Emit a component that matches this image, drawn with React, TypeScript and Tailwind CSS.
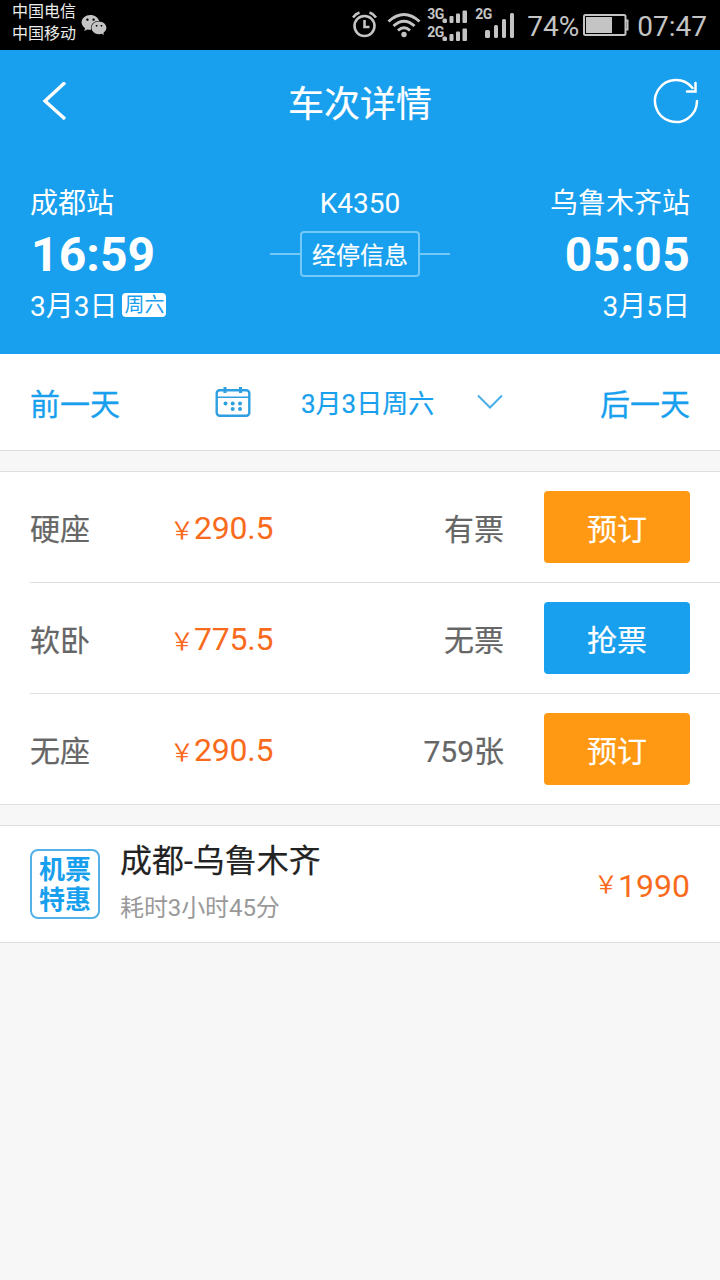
import { FaWeixin } from 'react-icons/fa';

const seats = [
    {
        id: 1,
        name: "硬座",
        price: "290.5",
        left: "有票",
        action: "预订",
        color: "bg-[#ff9913]"
    },
    {
        id: 2,
        name: "软卧",
        price: "775.5",
        left: "无票",
        action: "抢票",
        color: "bg-[#189fed]"
    },
    {
        id: 3,
        name: "无座",
        price: "290.5",
        left: "759张",
        action: "预订",
        color: "bg-[#ff9913]"
    },
]

function AlarmIcon() {
    return (
        <svg width="26" height="28" viewBox="0 0 26 28" fill="none" stroke="#c4c4c4" strokeWidth="2.6">
            <circle cx="12.5" cy="15" r="10" />
            <path d="M12.5 9v7h5" strokeWidth="2.6" />
            <path d="M1 6.5Q3.5 2.8 7.5 1.6M24 6.5Q21.5 2.8 17.5 1.6" />
        </svg>
    )
}

function WifiIcon() {
    return (
        <svg width="34" height="26" viewBox="0 0 34 26" fill="none" stroke="#c4c4c4" strokeWidth="3">
            <path d="M1.5 9.5Q17-4.5 32.5 9.5" />
            <path d="M6.5 14Q17 4.5 27.5 14" />
            <path d="M11 18.5Q17 13 23 18.5" />
            <circle cx="17" cy="22.5" r="2.7" fill="#c4c4c4" stroke="none" />
        </svg>
    )
}

function SmallSignal() {
    return (
        <svg width="26" height="14" viewBox="0 0 26 14" fill="#c4c4c4">
            <rect x="0.5" y="9.5" width="4.5" height="4.5" rx="1.5" />
            <rect x="7.5" y="7" width="4" height="7" rx="1" />
            <rect x="14" y="4.5" width="4" height="9.5" rx="1" />
            <rect x="20.5" y="1.5" width="4.5" height="12.5" rx="1" />
        </svg>
    )
}

function BigSignal() {
    return (
        <svg width="30" height="26" viewBox="0 0 30 26" fill="#c4c4c4">
            <rect x="0" y="18" width="5" height="8" rx="1.5" />
            <rect x="9" y="13" width="4" height="13" rx="1.5" />
            <rect x="17" y="7" width="4" height="19" rx="1.5" />
            <rect x="25" y="1" width="4" height="25" rx="1.5" />
        </svg>
    )
}

function BatteryIcon() {
    return (
        <svg width="46" height="24" viewBox="0 0 46 24" fill="none">
            <rect x="1" y="2" width="41.5" height="20" rx="1.5" stroke="#c4c4c4" strokeWidth="2" />
            <rect x="3" y="4" width="26" height="16" fill="#c4c4c4" />
            <path d="M43 7.5h1.5v9H43" stroke="#c4c4c4" strokeWidth="2" />
        </svg>
    )
}

function CalendarIcon() {
    return (
        <svg width="36" height="32" viewBox="0 0 36 32" fill="none" stroke="#2e9fe0" strokeWidth="2.4">
            <rect x="1.7" y="4.2" width="32.6" height="25.6" rx="3" />
            <path d="M1.5 11.3h33" strokeWidth="1.5" />
            <path d="M10 1v6M25.5 1v6" strokeWidth="3" />
            <g fill="#2e9fe0" stroke="none">
                <circle cx="10.5" cy="17.5" r="2" />
                <circle cx="17.7" cy="17.5" r="2" />
                <circle cx="25" cy="17.5" r="2" />
                <circle cx="17.7" cy="23" r="2" />
                <circle cx="25" cy="23" r="2" />
            </g>
        </svg>
    )
}

function StatusBar() {
    return (
        <div className="flex h-[50px] items-start bg-black px-3 text-[#c4c4c4]">
            <div className="pt-[1px] text-base leading-[22px] text-[#ececec]">
                <p>中国电信</p>
                <p>中国移动</p>
            </div>
            <FaWeixin className="ml-[5px] mt-3 size-[26px] text-[#c4c4c4]" />
            <div className="ml-auto flex pr-px">
                <div className="mt-[11px]"><AlarmIcon /></div>
                <div className="ml-[9px] mt-[12px]"><WifiIcon /></div>
                <div className="ml-[6px] mt-[7px] flex flex-col gap-[2px] text-[14px] font-bold leading-[15px] tracking-[-0.5px]">
                    <div className="flex">
                        <span className="w-[15px]">3G</span>
                        <div className="mt-[2px]"><SmallSignal /></div>
                    </div>
                    <div className="flex">
                        <span className="w-[15px]">2G</span>
                        <div className="mt-[2px]"><SmallSignal /></div>
                    </div>
                </div>
                <div className="ml-[7px] mt-[7px] w-[10px] text-[14px] font-bold leading-[15px] tracking-[-0.5px]">2G</div>
                <div className="mt-[12px]"><BigSignal /></div>
                <span className="ml-[12px] w-[56px] text-[28px] leading-[53px]">74%</span>
                <div className="mt-[13px]"><BatteryIcon /></div>
                <span className="ml-[8px] text-[28px] leading-[53px]">07:47</span>
            </div>
        </div>
    )
}

function Header() {
    return (
        <div className="h-[304px] bg-[#189fed] text-white">
            <div className="flex h-[104px] items-center justify-between pl-[42px] pr-[20px]">
                <svg width="26" height="40" viewBox="0 0 26 40" fill="none" stroke="white" strokeWidth="3.4">
                    <path d="M23 .5 3 19 23 37" />
                </svg>
                <h1 className="pt-[5px] text-4xl leading-[50px] [-webkit-text-stroke:0.2px]">车次详情</h1>
                <svg width="48" height="48" viewBox="0 0 48 48" fill="none" stroke="white" strokeWidth="2.5" strokeLinecap="round">
                    <path d="M45 23A21 21 0 1 1 40.5 10" />
                    <path d="M43.5 5v8.5H35" />
                </svg>
            </div>
            <div className="flex justify-between px-[30px]">
                <div className="w-[210px]">
                    <p className="pt-[30px] text-[28px] leading-10">成都站</p>
                    <p className="mt-px pl-px text-5xl font-bold leading-[60px] tracking-[0.1px]">16:59</p>
                    <div className="mt-px flex items-center">
                        <span className="text-[28px] leading-[42px]">3月3日</span>
                        <span className="mb-[5px] ml-[5px] h-6 rounded bg-white px-[2px] text-xl leading-[25px] text-[#189fed]">周六</span>
                    </div>
                </div>
                <div className="flex flex-col items-center">
                    <p className="pt-[30px] text-[28px] leading-[40px]">K4350</p>
                    <div className="mt-[7px] flex items-center">
                        <div className="h-0.5 w-[30px] bg-[#74c9f8]" />
                        <button className="h-[46px] w-[120px] rounded border-2 border-[#74c9f8] text-2xl leading-[46px] [-webkit-text-stroke:0.2px]">经停信息</button>
                        <div className="h-0.5 w-[30px] bg-[#74c9f8]" />
                    </div>
                </div>
                <div className="w-[210px] text-right">
                    <p className="pt-[30px] text-[28px] leading-10">乌鲁木齐站</p>
                    <p className="mt-px text-5xl font-bold leading-[60px] tracking-[0.3px]">05:05</p>
                    <p className="mt-px text-[28px] leading-[42px]">3月5日</p>
                </div>
            </div>
        </div>
    )
}

function DayPicker() {
    return (
        <div className="flex h-[97px] items-center border-b border-[#dfdfdf] bg-white px-[30px] text-[#189fed]">
            <button className="pt-[5px] text-[30px] leading-10 [-webkit-text-stroke:0.3px]">前一天</button>
            <div className="ml-[95px]"><CalendarIcon /></div>
            <span className="ml-[50px] pt-[3px] text-[26px] leading-9 [-webkit-text-stroke:0.2px]">3月3日周六</span>
            <svg width="26" height="16" viewBox="0 0 26 16" fill="none" stroke="#46aee9" strokeWidth="2" className="ml-[43px]">
                <path d="M1 1.5 13 13.5 25 1.5" />
            </svg>
            <button className="ml-auto pt-[5px] text-[30px] leading-10 [-webkit-text-stroke:0.3px]">后一天</button>
        </div>
    )
}

function SeatList() {
    return (
        <div className="mt-5 border-y border-[#dfdfdf] bg-white pl-[30px] text-[30px] text-[#666]">
            {seats.map(seat => (
                <div key={seat.id} className="flex h-[111px] items-center border-b border-[#dfdfdf] pr-[30px] last:h-[110px] last:border-b-0">
                    <span className="w-[140px] pt-[5px] leading-10 [-webkit-text-stroke:0.2px]">{seat.name}</span>
                    <div className="flex items-baseline pt-[4px] leading-10 text-[#f96b1c]">
                        <span className="w-6 text-2xl leading-10">￥</span>
                        <span className="text-[32px] tracking-[-0.2px]">{seat.price}</span>
                    </div>
                    <span className="ml-auto pt-[5px] leading-10 [-webkit-text-stroke:0.2px]">{seat.left}</span>
                    <button className={`ml-10 h-[72px] w-[146px] rounded pt-[5px] leading-10 text-white [-webkit-text-stroke:0.2px] ${seat.color}`}>{seat.action}</button>
                </div>
            ))}
        </div>
    )
}

function FlightDeal() {
    return (
        <div className="mt-5 flex h-[118px] items-center border-y border-[#dfdfdf] bg-white px-[30px]">
            <div className="size-[70px] rounded-lg border-2 border-[#57b1e6] pt-[4px] text-center text-[26px] font-bold leading-[30px] text-[#189fed]">
                <p>机票</p>
                <p>特惠</p>
            </div>
            <div className="ml-5">
                <p className="text-[32px] leading-[46px] text-[#222] [-webkit-text-stroke:0.2px]">成都-乌鲁木齐</p>
                <p className="mt-px text-2xl leading-[46px] text-[#999] tracking-[-0.1px]">耗时3小时45分</p>
            </div>
            <div className="ml-auto flex items-center pt-[3px] text-[#f96b1c]">
                <span className="w-6 pb-[2px] text-2xl leading-10">￥</span>
                <span className="text-[32px] leading-10">1990</span>
            </div>
        </div>
    )
}

export default function App() {
    return (
        <div className="min-h-screen w-full bg-[#f7f7f7] font-['Roboto','Noto_Sans_CJK_SC',sans-serif]">
            <StatusBar />
            <Header />
            <DayPicker />
            <SeatList />
            <FlightDeal />
        </div>
    )
}
